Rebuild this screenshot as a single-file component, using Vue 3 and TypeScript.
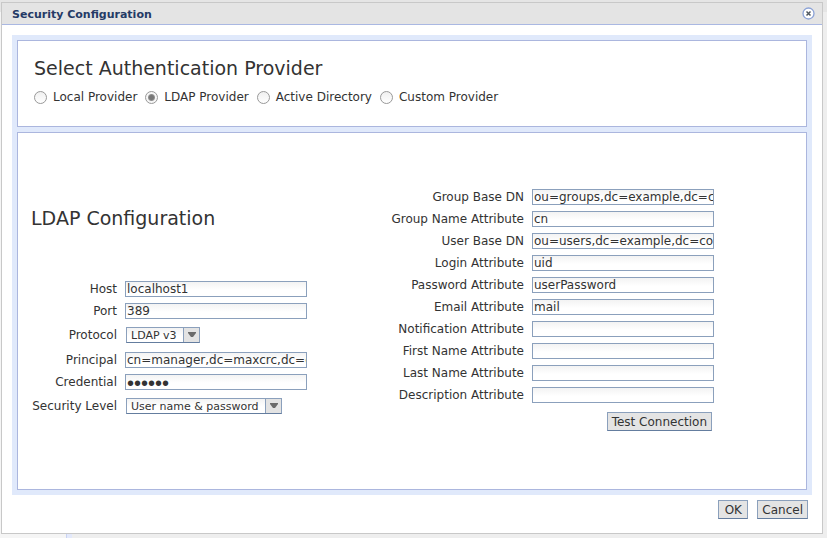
<script setup lang="ts">
import { reactive, ref } from 'vue'

interface Field {
  id: string
  label: string
  kind: 'text' | 'password' | 'select'
  value: string
}

const providers: string[] = ['Local Provider', 'LDAP Provider', 'Active Directory', 'Custom Provider']
const provider = ref('LDAP Provider')

const connection = reactive<Field[]>([
  { id: 'host', label: 'Host', kind: 'text', value: 'localhost1' },
  { id: 'port', label: 'Port', kind: 'text', value: '389' },
  { id: 'protocol', label: 'Protocol', kind: 'select', value: 'LDAP v3' },
  { id: 'principal', label: 'Principal', kind: 'text', value: 'cn=manager,dc=maxcrc,dc=com' },
  { id: 'credential', label: 'Credential', kind: 'password', value: 'secret' },
  { id: 'security', label: 'Security Level', kind: 'select', value: 'User name & password' },
])

const attributes = reactive<Field[]>([
  { id: 'group-base', label: 'Group Base DN', kind: 'text', value: 'ou=groups,dc=example,dc=com' },
  { id: 'group-name', label: 'Group Name Attribute', kind: 'text', value: 'cn' },
  { id: 'user-base', label: 'User Base DN', kind: 'text', value: 'ou=users,dc=example,dc=com' },
  { id: 'login', label: 'Login Attribute', kind: 'text', value: 'uid' },
  { id: 'password', label: 'Password Attribute', kind: 'text', value: 'userPassword' },
  { id: 'email', label: 'Email Attribute', kind: 'text', value: 'mail' },
  { id: 'notification', label: 'Notification Attribute', kind: 'text', value: '' },
  { id: 'first-name', label: 'First Name Attribute', kind: 'text', value: '' },
  { id: 'last-name', label: 'Last Name Attribute', kind: 'text', value: '' },
  { id: 'description', label: 'Description Attribute', kind: 'text', value: '' },
])
</script>

<template>
  <div class="page">
    <section class="dialog" role="dialog" aria-labelledby="dialog-title">
      <header class="titlebar">
        <h1 id="dialog-title">Security Configuration</h1>
        <button class="close" type="button" aria-label="Close">
          <svg width="13" height="13" viewBox="0 0 13 13">
            <circle cx="6.5" cy="6.5" r="5.5" fill="#fff" stroke="#8ba2d6" stroke-width="1.3" />
            <path d="M4.5 4.5l4 4M8.5 4.5l-4 4" stroke="#505860" stroke-width="1.5" />
          </svg>
        </button>
      </header>

      <main class="frame">
        <section class="panel providers">
          <h2>Select Authentication Provider</h2>
          <div class="radios">
            <label v-for="name in providers" :key="name">
              <input v-model="provider" type="radio" name="provider" :value="name" />
              {{ name }}
            </label>
          </div>
        </section>

        <section class="panel config">
          <div class="connection">
            <h2>LDAP Configuration</h2>
            <div class="fields">
              <div v-for="f in connection" :key="f.id" class="row" :class="{ tall: f.kind === 'select' }">
                <label :for="f.id">{{ f.label }}</label>
                <span v-if="f.kind === 'select'" class="select">
                  <select :id="f.id" v-model="f.value">
                    <option>{{ f.value }}</option>
                  </select>
                  <svg class="arrow" width="15" height="14" viewBox="0 0 15 14">
                    <path d="M4 4h8v1L9 9H7L4 5z" fill="#6b6b6b" />
                  </svg>
                </span>
                <input v-else :id="f.id" v-model="f.value" class="text" :type="f.kind" />
              </div>
            </div>
          </div>

          <div class="attributes">
            <div class="fields">
              <div v-for="f in attributes" :key="f.id" class="row">
                <label :for="f.id">{{ f.label }}</label>
                <input :id="f.id" v-model="f.value" class="text" type="text" />
              </div>
            </div>
            <button class="btn test" type="button">Test Connection</button>
          </div>
        </section>
      </main>

      <footer class="actions">
        <button class="btn" type="button">OK</button>
        <button class="btn" type="button">Cancel</button>
      </footer>
    </section>
  </div>
</template>

<style>
body {
  background: #eee;
}
</style>

<style scoped>
.page {
  display: flex;
  box-sizing: border-box;
  min-height: 100vh;
  padding: 2px 4px 4px 1px;
  background:
    linear-gradient(#e5e5e5, #e5e5e5) 0 0 / 100% 12px no-repeat,
    linear-gradient(90deg, #f5f5f5 66px, #c9d3f2 66px 67px, #e3e9fb 67px 72px, #eee 72px);
  color: #333;
  font: 12px/16px "DejaVu Sans", Verdana, sans-serif;
}
.dialog {
  display: flex;
  flex: 1;
  flex-direction: column;
  border: 1px solid #c8c8c8;
  background: #fff;
}
.titlebar {
  display: flex;
  align-items: center;
  justify-content: space-between;
  height: 21px;
  padding: 0 7px 0 10px;
  border-bottom: 1px solid #aab8e2;
  background: #e4e4e4;
}
h1 {
  margin: 2px 0 0;
  color: #243a66;
  font-size: 11px;
  line-height: 14px;
}
.close {
  display: flex;
  padding: 0;
  border: 0;
  background: none;
}
.frame {
  display: flex;
  flex: 1;
  flex-direction: column;
  gap: 5px;
  margin: 10px 10px 0;
  padding: 5px;
  background: #e0e9fb;
}
.panel {
  border: 1px solid #abb6de;
  background: #fff;
}
.providers {
  padding: 14px 16px 21px;
}
h2 {
  margin: 0;
  font-size: 19px;
  font-weight: normal;
  line-height: 26px;
}
.radios {
  display: flex;
  flex-wrap: wrap;
  gap: 8px;
  margin-top: 8px;
}
.radios label {
  display: flex;
  align-items: center;
  gap: 6px;
}
.radios input {
  appearance: none;
  width: 13px;
  height: 13px;
  margin: 0;
  border: 1px solid #999;
  border-radius: 50%;
  background: linear-gradient(#f0f0f0, #fff);
}
.radios input:checked {
  background: radial-gradient(circle, #777 2px, #909090 3px, #f6f6f6 4px);
}
.config {
  display: flex;
  flex: 1;
  align-items: center;
  gap: 80px;
  padding: 0 14px 5px 13px;
}
.connection {
  padding-top: 7px;
}
.connection h2 {
  margin-bottom: 47px;
}
.fields {
  display: grid;
  column-gap: 8px;
}
.connection .fields {
  grid-template-columns: minmax(86px, auto) 182px;
}
.attributes .fields {
  grid-template-columns: minmax(137px, auto) 182px;
}
.row {
  display: grid;
  grid-column: 1 / -1;
  grid-template-columns: subgrid;
  align-items: center;
  height: 22px;
}
.row.tall {
  height: 27px;
}
.row label {
  text-align: right;
  white-space: nowrap;
}
.text {
  box-sizing: border-box;
  width: 100%;
  height: 16px;
  padding: 0 0 0 1px;
  border: 1px solid #8ba0bc;
  background: linear-gradient(#f3f3f3, #fff 8px);
  color: #333;
  font: inherit;
}
.text[type="password"] {
  padding-top: 4px;
  font-family: "Liberation Sans", Arial, sans-serif;
  font-size: 20px;
}
.select {
  display: flex;
  justify-self: start;
  height: 14px;
  margin-left: 1px;
  border: 1px solid #8ba0bc;
  border-bottom-color: #647d9f;
  background: linear-gradient(#f3f3f3, #fff 8px);
}
.select select {
  appearance: none;
  padding: 0 6px 0 4px;
  border: 0;
  background: none;
  color: #333;
  font: inherit;
  font-size: 11px;
}
.arrow {
  border-left: 1px solid #8ba0bc;
  background: #e3e3e3;
  pointer-events: none;
}
.attributes {
  display: flex;
  flex-direction: column;
}
.btn {
  min-width: 30px;
  height: 19px;
  padding: 0 4px;
  border: 1px solid #8ba0bc;
  border-bottom-color: #647d9f;
  background: #e4e4e4;
  color: #333;
  font: inherit;
}
.test {
  align-self: flex-end;
  margin: 6px 2px 0 0;
}
.actions {
  display: flex;
  justify-content: flex-end;
  gap: 9px;
  padding: 5px 14px 14px;
}
</style>
